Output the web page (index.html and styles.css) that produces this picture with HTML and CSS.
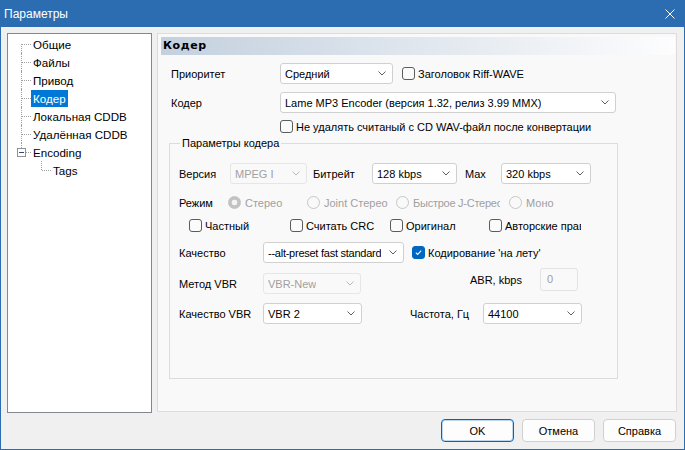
FILE: index.html
```html
<!DOCTYPE html>
<html lang="ru">
<head>
<meta charset="utf-8">
<title>Параметры</title>
<link rel="stylesheet" href="styles.css">
</head>
<body>
<div class="window">
  <div class="titlebar">
    <span class="title">Параметры</span>
    <svg class="close" width="10" height="10" viewBox="0 0 10 10"><path d="M0.5 0.5 L9.5 9.5 M9.5 0.5 L0.5 9.5"/></svg>
  </div>
  <div class="main">
    <div class="tree">
      <div class="node top first"><span class="conn"></span><span class="tlabel">Общие</span></div>
      <div class="node top"><span class="conn"></span><span class="tlabel">Файлы</span></div>
      <div class="node top"><span class="conn"></span><span class="tlabel">Привод</span></div>
      <div class="node top"><span class="conn"></span><span class="tlabel selected">Кодер</span></div>
      <div class="node top"><span class="conn"></span><span class="tlabel">Локальная CDDB</span></div>
      <div class="node top"><span class="conn"></span><span class="tlabel">Удалённая CDDB</span></div>
      <div class="node top last"><span class="conn"><span class="minus"></span></span><span class="tlabel">Encoding</span></div>
      <div class="node child last"><span class="conn"></span><span class="tlabel">Tags</span></div>
    </div>
    <div class="panel">
      <div class="panel-head">Кодер</div>
      <div class="form">
        <div class="row r1">
          <span class="lbl w-main">Приоритет</span>
          <div class="combo w-prio"><span class="val">Средний</span><svg class="chev" viewBox="0 0 8 5"><path d="M0.5 0.5 L4 4 L7.5 0.5"/></svg></div>
          <label class="check ml9"><span class="box"></span><span class="ctext">Заголовок Riff-WAVE</span></label>
        </div>
        <div class="row r2">
          <span class="lbl w-main">Кодер</span>
          <div class="combo w-enc"><span class="val">Lame MP3 Encoder (версия 1.32, релиз 3.99 MMX)</span><svg class="chev" viewBox="0 0 8 5"><path d="M0.5 0.5 L4 4 L7.5 0.5"/></svg></div>
        </div>
        <div class="row r3">
          <label class="check"><span class="box"></span><span class="ctext">Не удалять считаный с CD WAV-файл после конвертации</span></label>
        </div>
        <fieldset class="group">
          <legend>Параметры кодера</legend>
          <div class="grow ga">
            <span class="lbl w-ver">Версия</span>
            <div class="combo disabled w-ver-c"><span class="val">MPEG I</span><svg class="chev" viewBox="0 0 8 5"><path d="M0.5 0.5 L4 4 L7.5 0.5"/></svg></div>
            <span class="lbl w-bit">Битрейт</span>
            <div class="combo w-bit-c"><span class="val">128 kbps</span><svg class="chev" viewBox="0 0 8 5"><path d="M0.5 0.5 L4 4 L7.5 0.5"/></svg></div>
            <span class="lbl w-max">Max</span>
            <div class="combo w-max-c"><span class="val">320 kbps</span><svg class="chev" viewBox="0 0 8 5"><path d="M0.5 0.5 L4 4 L7.5 0.5"/></svg></div>
          </div>
          <div class="grow gb">
            <span class="lbl w-mode">Режим</span>
            <label class="radio ri1"><span class="dot on"></span><span class="rtext">Стерео</span></label>
            <label class="radio ri2"><span class="dot"></span><span class="rtext">Joint Стерео</span></label>
            <label class="radio ri3"><span class="dot"></span><span class="rtext tight">Быстрое J-Стерео</span></label>
            <label class="radio ri4"><span class="dot"></span><span class="rtext">Моно</span></label>
          </div>
          <div class="grow gc">
            <label class="check ci1"><span class="box"></span><span class="ctext">Частный</span></label>
            <label class="check ci2"><span class="box"></span><span class="ctext">Считать CRC</span></label>
            <label class="check ci3"><span class="box"></span><span class="ctext">Оригинал</span></label>
            <label class="check ci4"><span class="box"></span><span class="ctext">Авторские права</span></label>
          </div>
          <div class="grow gd">
            <span class="lbl w-q">Качество</span>
            <div class="combo w-q-c"><span class="val tight">--alt-preset fast standard</span><svg class="chev" viewBox="0 0 8 5"><path d="M0.5 0.5 L4 4 L7.5 0.5"/></svg></div>
            <label class="check ml8"><span class="box checked"><svg viewBox="0 0 13 13"><path d="M3.3 6.7 L5.5 8.8 L9.7 4.4"/></svg></span><span class="ctext">Кодирование 'на лету'</span></label>
          </div>
          <div class="grow ge">
            <div class="pair pe1">
              <span class="lbl w-q">Метод VBR</span>
              <div class="combo disabled w-vbr-c"><span class="val">VBR-New</span><svg class="chev" viewBox="0 0 8 5"><path d="M0.5 0.5 L4 4 L7.5 0.5"/></svg></div>
            </div>
            <div class="pair pe2">
              <span class="lbl w-abr">ABR, kbps</span>
              <div class="field disabled">0</div>
            </div>
          </div>
          <div class="grow gf">
            <span class="lbl w-q">Качество VBR</span>
            <div class="combo w-vq-c"><span class="val">VBR 2</span><svg class="chev" viewBox="0 0 8 5"><path d="M0.5 0.5 L4 4 L7.5 0.5"/></svg></div>
            <span class="lbl w-freq">Частота, Гц</span>
            <div class="combo w-vq-c"><span class="val">44100</span><svg class="chev" viewBox="0 0 8 5"><path d="M0.5 0.5 L4 4 L7.5 0.5"/></svg></div>
          </div>
        </fieldset>
      </div>
    </div>
  </div>
  <div class="footer">
    <button class="btn default">OK</button>
    <button class="btn">Отмена</button>
    <button class="btn">Справка</button>
  </div>
</div>
</body>
</html>
```
FILE: styles.css
```css
* { box-sizing: border-box; }
html, body { margin: 0; padding: 0; }
body {
  font-family: "Liberation Sans", Arial, sans-serif;
  font-size: 11px;
  color: #000;
  background: #f0f0f0;
}
.window {
  width: 685px;
  height: 450px;
  border: 1px solid #2b6db0;
  background: #f0f0f0;
  display: flex;
  flex-direction: column;
}
.titlebar {
  height: 26px;
  flex: none;
  background: #2b6db0;
  color: #fff;
  display: flex;
  align-items: center;
  justify-content: space-between;
  padding: 0 9px 0 3px;
  font-size: 12px;
}
.close { stroke: #fff; stroke-width: 1; fill: none; }

.main {
  display: flex;
  padding: 6px 0 0 6px;
  height: 386px;
  flex: none;
}
.tree {
  width: 145px;
  height: 380px;
  border: 1px solid #828790;
  background: #fff;
  padding-top: 1px;
}
.node {
  display: flex;
  height: 18px;
  align-items: center;
  font-size: 11.6px;
}
.node.top { padding-left: 13px; }
.node.child { padding-left: 33px; }
.conn {
  position: relative;
  width: 10px;
  height: 18px;
  flex: none;
}
.conn::before {
  content: "";
  position: absolute;
  left: 0;
  top: 0;
  bottom: 0;
  border-left: 1px dotted #a0a0a0;
}
.first .conn::before { top: 9px; }
.last .conn::before { bottom: 9px; }
.conn::after {
  content: "";
  position: absolute;
  left: 1px;
  top: 9px;
  width: 9px;
  border-top: 1px dotted #a0a0a0;
}
.minus {
  position: absolute;
  left: -4px;
  top: 5px;
  width: 9px;
  height: 9px;
  border: 1px solid #919191;
  background: #fff;
  z-index: 1;
}
.minus::after {
  content: "";
  position: absolute;
  left: 1px;
  top: 3px;
  width: 5px;
  border-top: 1px solid #2c4a7a;
}
.tlabel {
  padding: 0 2px;
  height: 17px;
  line-height: 17px;
  white-space: nowrap;
}
.tlabel.selected { background: #0078d7; color: #fff; }

.panel {
  margin-left: 5px;
  width: 520px;
  height: 379px;
  border: 1px solid #dcdcdc;
  background: #f9f9f9;
  padding: 3px 1px 0 3px;
}
.panel-head {
  height: 18px;
  line-height: 18px;
  padding-left: 2px;
  background: linear-gradient(to right, #c3d0de, #fdfdfe);
  font-family: "DejaVu Sans", Verdana, sans-serif;
  font-weight: bold;
  font-size: 11px;
  letter-spacing: 0.6px;
}
.form { padding-left: 10px; }
.row { display: flex; align-items: center; }
.r1 { margin-top: 8px; }
.r2 { margin-top: 8px; }
.r3 { margin-top: 7px; height: 13px; padding-left: 109px; }
.lbl { flex: none; white-space: nowrap; }
.w-main { width: 109px; }

.combo {
  flex: none;
  height: 21px;
  border: 1px solid #d0d0d0;
  border-radius: 3px;
  background: #fff;
  display: flex;
  align-items: center;
  justify-content: space-between;
  padding: 0 6px 0 4px;
  white-space: nowrap;
}
.combo .val { overflow: hidden; }
.tight { letter-spacing: -0.25px; }
.chev { width: 8px; height: 5px; flex: none; fill: none; stroke: #606060; stroke-width: 1; }
.combo.disabled { border-color: #e6e6e6; background: #f9f9f9; color: #a0a0a0; }
.combo.disabled .chev { stroke: #b8b8b8; }
.w-prio { width: 113px; }
.w-enc { width: 336px; }

.check, .radio {
  display: flex;
  align-items: center;
  height: 13px;
  white-space: nowrap;
  flex: none;
}
.ml9 { margin-left: 9px; }
.ml8 { margin-left: 8px; }
.box {
  width: 13px;
  height: 13px;
  flex: none;
  border: 1px solid #5c5c5c;
  border-radius: 3px;
  background: #fbfbfb;
  margin-right: 3px;
}
.box.checked { background: #0067c0; border-color: #0067c0; }
.box svg { display: block; width: 11px; height: 11px; fill: none; stroke: #fff; stroke-width: 1.2; }

.group {
  margin: 3px 0 0 -2px;
  padding: 0 0 54px 9px;
  width: 449px;
  border: 1px solid #dcdcdc;
  min-width: 0;
}
.group legend {
  margin-left: 1px;
  padding: 0 2px;
  line-height: 14px;
  height: 14px;
}
.grow { display: flex; align-items: center; }
.ga { margin-top: 13px; }
.w-ver { width: 51px; }
.w-ver-c { width: 77px; }
.w-bit { width: 59px; margin-left: 6px; }
.w-bit-c { width: 85px; }
.w-max { width: 36px; margin-left: 8px; }
.w-max-c { width: 90px; }

.gb { margin-top: 12px; height: 13px; }
.w-mode { width: 49px; }
.radio { color: #a0a0a0; overflow: hidden; }
.dot {
  width: 13px;
  height: 13px;
  flex: none;
  border-radius: 50%;
  border: 1px solid #c6c6c6;
  margin-right: 4px;
}
.dot.on { background: radial-gradient(circle, #f4f4f4 0 2.6px, #c2c2c2 3.2px); border-color: #c2c2c2; }
.ri1 { width: 79px; }
.ri2 { width: 89px; }
.ri3 { width: 104px; margin-right: 9px; }
.ri4 { width: 60px; }

.gc { margin-top: 10px; height: 13px; padding-left: 10px; }
.ci1 { width: 101px; }
.ci2 { width: 100px; }
.ci3 { width: 99px; }
.ci4 { width: 92px; overflow: hidden; }

.gd { margin-top: 10px; }
.w-q { width: 84px; }
.w-q-c { width: 141px; }

.ge { margin-top: 5px; align-items: flex-start; }
.pair { display: flex; align-items: center; }
.pe1 { margin-top: 5px; }
.pe2 { margin-left: 109px; }
.w-vbr-c { width: 98px; }
.w-abr { width: 70px; }
.field {
  width: 38px;
  height: 23px;
  border: 1px solid #e3e3e3;
  border-radius: 3px;
  background: #f9f9f9;
  padding: 4px 0 0 6px;
}
.field.disabled { color: #a0a0a0; }

.gf { margin-top: 9px; }
.w-vq-c { width: 99px; }
.w-freq { width: 73px; margin-left: 48px; }

.footer {
  display: flex;
  justify-content: flex-end;
  gap: 8px;
  padding: 6px 8px 0 0;
}
.btn {
  width: 73px;
  height: 23px;
  border: 1px solid #d0d0d0;
  border-radius: 4px;
  background: #fdfdfd;
  font-family: "Liberation Sans", Arial, sans-serif;
  font-size: 11px;
  color: #000;
  padding: 0;
}
.btn.default { border-color: #0067c0; box-shadow: inset 0 0 0 1px rgba(0, 103, 192, 0.25); }
```
